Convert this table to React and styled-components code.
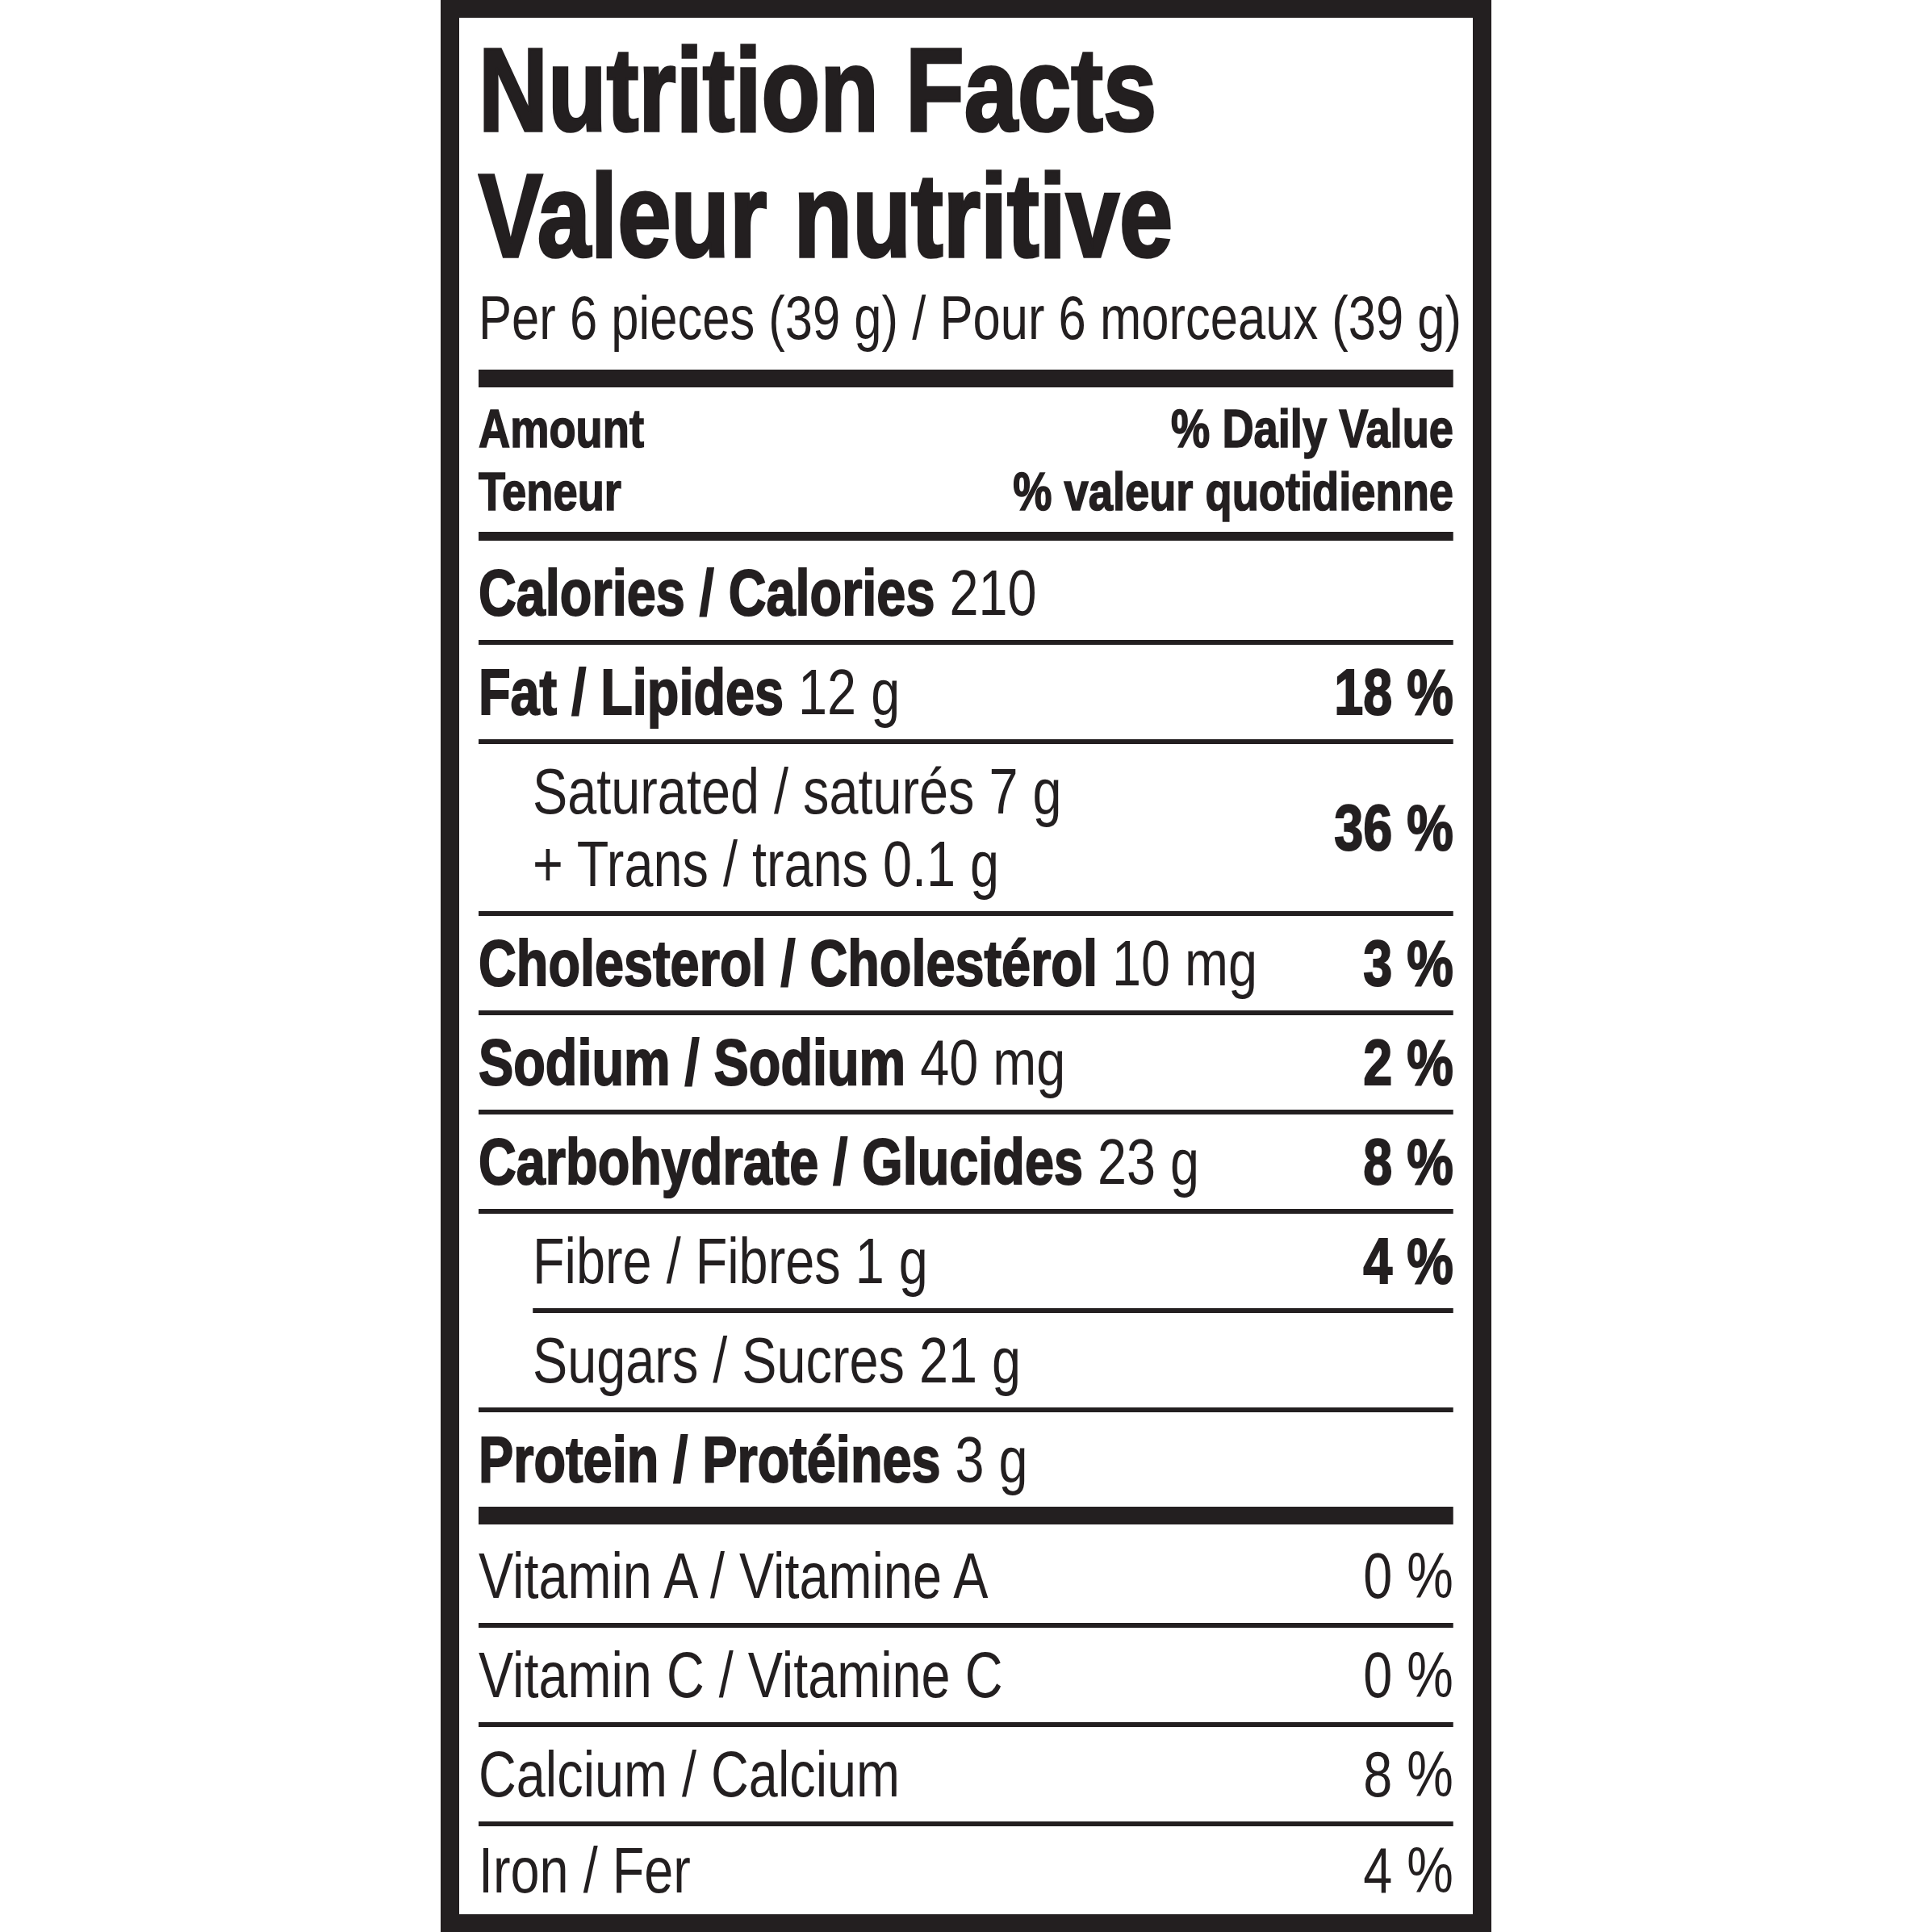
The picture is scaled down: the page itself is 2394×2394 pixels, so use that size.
import styled, { createGlobalStyle, css } from "styled-components";

const INK = "#231f20";
const FONT = `"Liberation Sans", Arial, sans-serif`;

// No condensed Helvetica is installed, so the sheet is laid out wide and
// squeezed horizontally to get the narrow label lettering.
const SQUEEZE = 0.81;
const CONTENT_WIDTH = 1208;
const INDENT = 67 / SQUEEZE;

const heavy = css`
  font-weight: 700;
  -webkit-text-stroke: 0.025em currentColor;
`;

const GlobalStyle = createGlobalStyle`
  html, body {
    margin: 0;
    padding: 0;
    background: #ffffff;
  }
  body {
    font-family: ${FONT};
    color: ${INK};
  }
`;

const Page = styled.div`
  width: 2394px;
  height: 2394px;
  display: flex;
  justify-content: center;
  background: #ffffff;
`;

const Label = styled.section`
  box-sizing: border-box;
  width: 1302px;
  height: 2394px;
  border: 23px solid ${INK};
  border-top-width: 22px;
  border-bottom-width: 22px;
  padding: 0 24px;
  display: flex;
  overflow: hidden;
`;

const Sheet = styled.div`
  flex-shrink: 0;
  width: ${CONTENT_WIDTH / SQUEEZE}px;
  display: flex;
  flex-direction: column;
  transform: scaleX(${SQUEEZE});
  transform-origin: left top;
`;

const Title = styled.h1`
  margin: 11px 0 0;
  font-size: 147px;
  line-height: 156px;
  ${heavy}
`;

const Serving = styled.p`
  margin: 4px 0 19px;
  font-size: 76px;
  line-height: 90px;
  white-space: nowrap;
`;

const Rule = styled.div`
  flex-shrink: 0;
  height: ${(p) => p.$weight || 6}px;
  margin-left: ${(p) => (p.$inset ? INDENT : 0)}px;
  background: ${INK};
`;

const Header = styled.div`
  display: flex;
  justify-content: space-between;
  padding-top: 12px;
  margin-bottom: 11px;
  font-size: 67px;
  line-height: 78px;
  ${heavy}
`;

const HeaderCol = styled.div`
  display: flex;
  flex-direction: column;
  align-items: ${(p) => (p.$right ? "flex-end" : "flex-start")};
`;

const Row = styled.div`
  box-sizing: border-box;
  flex-shrink: 0;
  display: flex;
  justify-content: space-between;
  align-items: center;
  height: ${(p) => p.$height || 117}px;
  padding-left: ${(p) => (p.$indent ? INDENT : 0)}px;
  padding-top: ${(p) => (p.$tall ? 6 : 0)}px;
  font-size: 80px;
  line-height: 90px;
  white-space: nowrap;
  ${(p) => p.$fill && "flex: 1; height: auto;"}
`;

const Lines = styled.div`
  display: flex;
  flex-direction: column;
`;

const Name = styled.span`
  ${heavy}
`;

const Value = styled.span`
  font-weight: 400;
`;

const Percent = styled.span`
  ${(p) => (p.$bold ? heavy : "font-weight: 400;")}
`;

const nutrients = [
  { name: "Calories / Calories", value: "210", tall: true, height: 123 },
  { name: "Fat / Lipides", value: "12 g", dv: "18 %" },
  {
    lines: ["Saturated / saturés 7 g", "+ Trans / trans 0.1 g"],
    dv: "36 %",
    indent: true,
    height: 207,
  },
  { name: "Cholesterol / Cholestérol", value: "10 mg", dv: "3 %" },
  { name: "Sodium / Sodium", value: "40 mg", dv: "2 %" },
  { name: "Carbohydrate / Glucides", value: "23 g", dv: "8 %" },
  { value: "Fibre / Fibres 1 g", dv: "4 %", indent: true, ruleInset: true },
  { value: "Sugars / Sucres 21 g", indent: true },
  { name: "Protein / Protéines", value: "3 g", last: true },
];

const vitamins = [
  { value: "Vitamin A / Vitamine A", dv: "0 %", tall: true, height: 122 },
  { value: "Vitamin C / Vitamine C", dv: "0 %" },
  { value: "Calcium / Calcium", dv: "8 %" },
  { value: "Iron / Fer", dv: "4 %", fill: true },
];

const NutrientRow = ({ item, boldDv }) => (
  <Row
    $height={item.height}
    $indent={item.indent}
    $tall={item.tall}
    $fill={item.fill}
  >
    {item.lines ? (
      <Lines>
        {item.lines.map((line) => (
          <Value key={line}>{line}</Value>
        ))}
      </Lines>
    ) : (
      <span>
        {item.name && <Name>{item.name} </Name>}
        <Value>{item.value}</Value>
      </span>
    )}
    {item.dv && <Percent $bold={boldDv}>{item.dv}</Percent>}
  </Row>
);

export default function App() {
  return (
    <>
      <GlobalStyle />
      <Page>
        <Label>
          <Sheet>
            <Title>
              Nutrition Facts
              <br />
              Valeur nutritive
            </Title>
            <Serving>Per 6 pieces (39 g) / Pour 6 morceaux (39 g)</Serving>
            <Rule $weight={22} />
            <Header>
              <HeaderCol>
                <span>Amount</span>
                <span>Teneur</span>
              </HeaderCol>
              <HeaderCol $right>
                <span>% Daily Value</span>
                <span>% valeur quotidienne</span>
              </HeaderCol>
            </Header>
            <Rule $weight={11} />
            {nutrients.map((item, i) => (
              <div key={i} style={{ display: "contents" }}>
                <NutrientRow item={item} boldDv />
                {item.last ? (
                  <Rule $weight={22} />
                ) : (
                  <Rule $inset={item.ruleInset} />
                )}
              </div>
            ))}
            {vitamins.map((item, i) => (
              <div key={i} style={{ display: "contents" }}>
                <NutrientRow item={item} />
                {!item.fill && <Rule />}
              </div>
            ))}
          </Sheet>
        </Label>
      </Page>
    </>
  );
}
